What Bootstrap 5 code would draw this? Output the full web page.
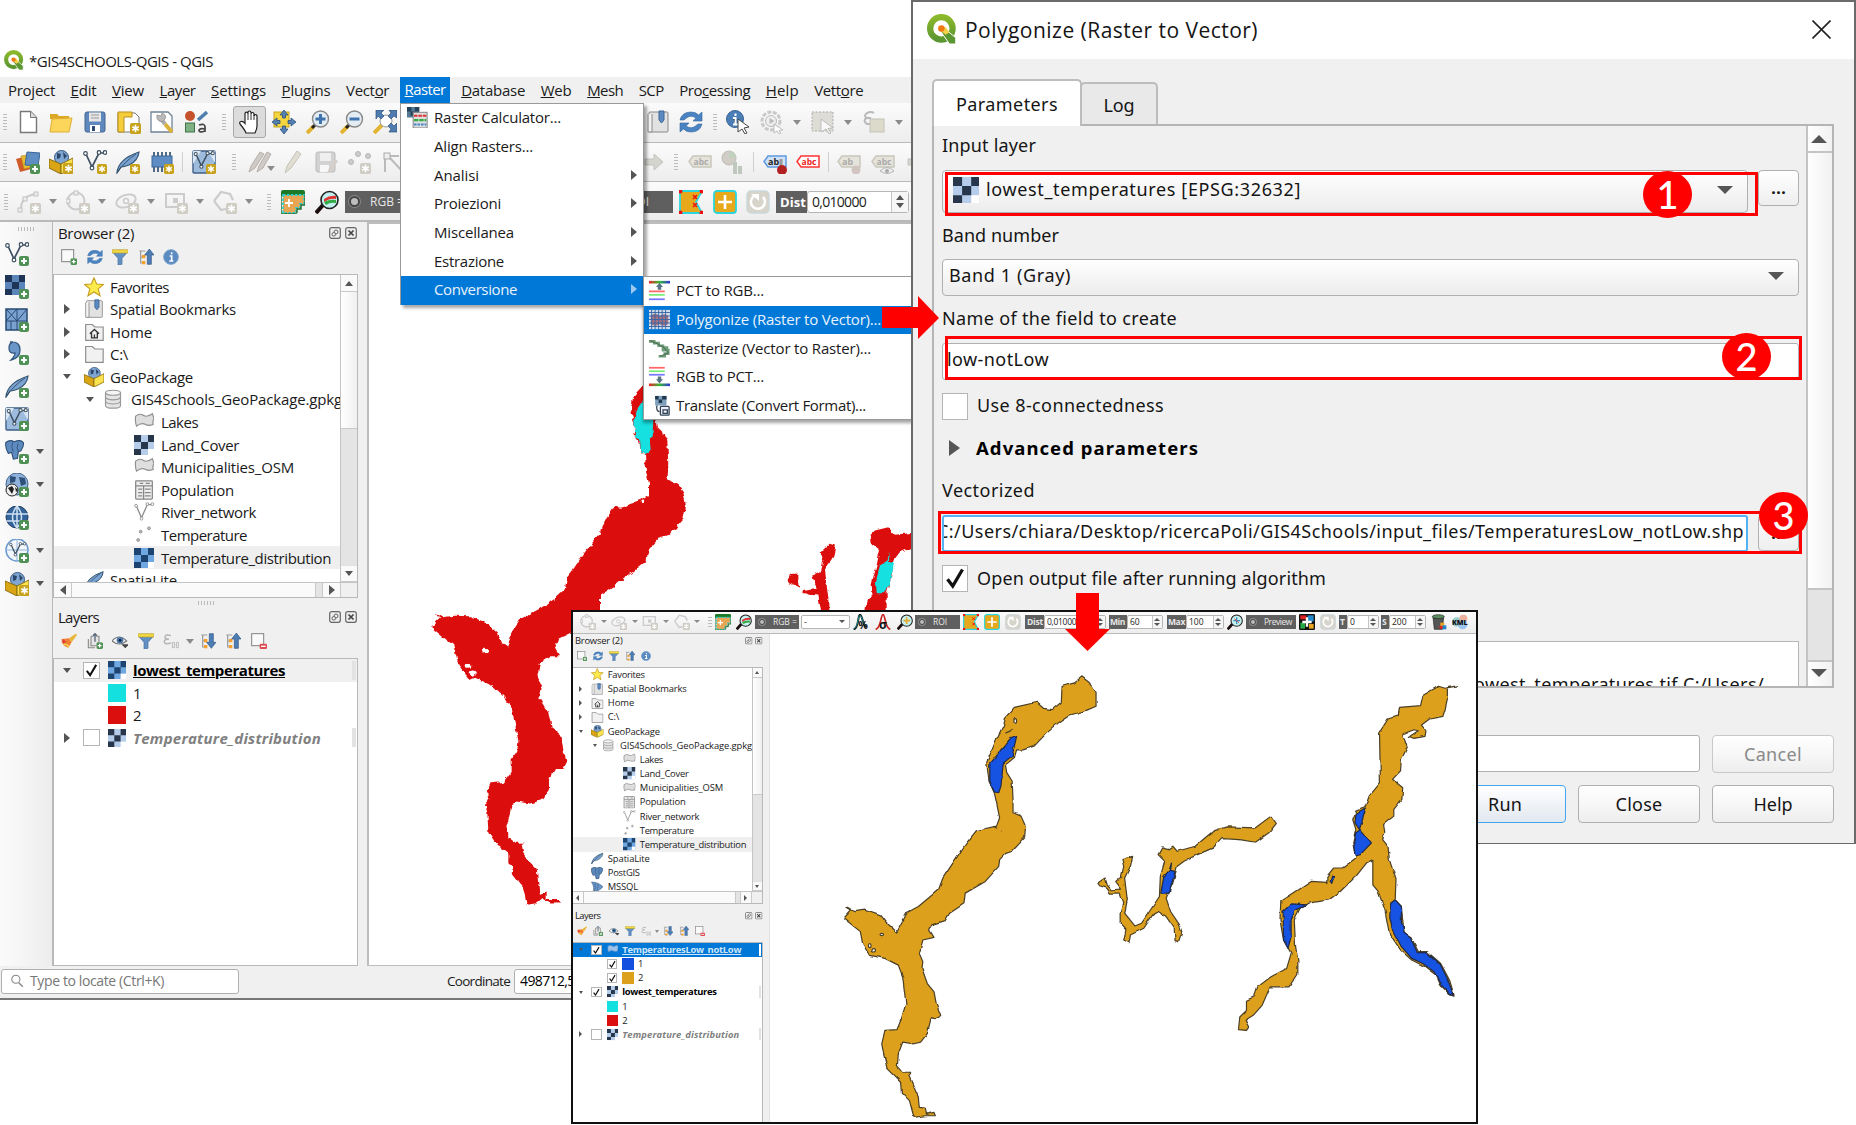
<!DOCTYPE html>
<html lang="en">
<head>
<meta charset="utf-8">
<title>QGIS - Polygonize</title>
<link href="https://cdn.jsdelivr.net/npm/bootstrap@5.3.0/dist/css/bootstrap.min.css" rel="stylesheet">
<style>
body{width:1856px;height:1125px;overflow:hidden;background:#fff;font-family:"Open Sans","Noto Sans",sans-serif;font-size:15px;line-height:1.2;color:#1a1a1a;position:relative}
span,button,a{white-space:nowrap}
.win{position:absolute;overflow:hidden}
#mainwin{left:0;top:40px;width:912px;height:960px;border-bottom:2px solid #777}
.q{display:block;width:24px;height:24px;flex:none}
.q svg{display:block;width:100%;height:100%;overflow:visible}
.titlerow{height:37px;padding:0 0 7px 4px;gap:5px;align-items:flex-end}
.titlerow .q{width:20px;height:20px}
.menurow{height:26px;background:#f0f0f0;padding-left:8px;gap:15.5px}
.menurow .act{background:#0078d7;color:#fff;padding:0 4.5px 0 5px;margin:0 -4.5px 0 -5px;height:26px;line-height:25px}
.tbar{height:40px;background:linear-gradient(#fbfbfb,#ededed);border-bottom:1px solid #b9b9b9;overflow:hidden}
.tbar>div{height:39px}
.hd{width:4px;height:18px;flex:none;background-image:radial-gradient(circle,#b5b5b5 .8px,transparent 1px);background-size:2.5px 3px}
.hh{width:18px;height:4px;background-image:radial-gradient(circle,#b5b5b5 .8px,transparent 1px);background-size:3px 2.5px}
.dn{width:0;height:0;flex:none;border:4.6px solid transparent;border-top:5.5px solid #8b8b8b;border-bottom:0}
.dk{border-top-color:#555}
.rt{width:0;height:0;flex:none;border:5px solid transparent;border-left:6px solid #555;border-right:0}
.up{width:0;height:0;flex:none;border:4.6px solid transparent;border-bottom:5.5px solid #555;border-top:0}
.lf{width:0;height:0;flex:none;border:5px solid transparent;border-right:6px solid #555;border-left:0}
.sp{width:1px;height:20px;background:#cfcfcf;margin:0 -1px;flex:none}
.handbox{width:33px;height:32px;border:1px solid #a9a9a9;border-radius:3px;background:#dcdcdc;padding:3px;margin:0 -3px 0 -3px}
.darkbox{background:#5f5f5f;color:#e8e8e8;height:22px;flex:none;font-size:12px;line-height:22px}
.dot{width:11px;height:11px;border-radius:50%;background:#bdbdbd;border:2.5px solid #444;flex:none;box-shadow:0 0 0 1px #888}
.spin{border:1px solid #b5b5b5;border-radius:3px;background:#fff;height:22px;font-size:14px;flex:none}
.spin .arrows{border-left:1px solid #c5c5c5;width:17px;background:#f6f6f6;height:100%;gap:3px}
.side{width:53px;background:linear-gradient(90deg,#fbfbfb,#ededed);border-right:1px solid #b9b9b9;padding:5px 0 0 5px}
.side .hh{margin:0 0 6px 12px}
.side .r{height:33px;gap:7px}
.panelcol{width:314px;background:#f0f0f0;padding-right:9px;overflow:hidden}
.ptitle{height:22px;padding:0 0 0 5px}
.ptitle .q{width:12px;height:12px}
.ptitle .q.me-1:last-child{margin-right:1px!important}
.ptools{height:30px;padding:0 0 4px 8px;gap:9.6px}
.ptools .q{width:16px;height:16px}
.box{border:1px solid #b9b9b9;background:#fff;overflow:hidden}
.treewrap{height:324px}
.trow{height:22.6px}
.trow .ar{width:14px;display:flex;justify-content:center}
.trow .q{width:20px;height:20px}
.trow.sel{background:#efefef}
.l0{padding-left:6px}.l0 .q{margin:0 6.5px 0 9.5px}
.l1{padding-left:32px}.l1 .q{margin:0 8px 0 9px}
.l2{padding-left:80px}.l2 .q{margin:0 7px 0 0}
.vs{width:17px;background:#e4e4e4;border-left:1px solid #c4c4c4}
.vs .bt{height:17px;background:#fafafa;border:solid #c9c9c9;border-width:0 0 1px}
.vs .th{height:137px;background:linear-gradient(90deg,#fff,#f0f0f0);border-bottom:1px solid #c9c9c9}
.hs{height:18px;border-top:1px solid #c4c4c4;background:#fafafa}
.hs>div{border-right:1px solid #c9c9c9;height:100%}
.lrow{height:22.5px;padding-left:6px}
.lrow .ar{width:14px;display:flex;justify-content:center;margin-right:9px}
.lrow .q{width:18px;height:18px;margin:0 7px 0 8px}
.ck{width:17px;height:17px;border:1px solid #b5b5b5;background:#fff;flex:none}
.ck svg{display:block;width:100%;height:100%}
.sw{width:18px;height:18px;margin-right:7px;flex:none}
.tail{width:4px;height:19px;background:#e3e3e3;margin-left:auto;margin-right:1px}
.canvas{flex:1;background:#fff;border:1px solid #bdbdbd;border-width:2px 0 1px 2px;overflow:hidden;position:relative}
.status{height:32px;background:#f0f0f0;padding:0 0 2px 1px}
.locate{width:238px;height:25px;border:1px solid #b0b0b0;border-radius:3px;background:#fff;color:#777;font-size:14px}
.pop{position:absolute;background:#fff;border:1px solid #9a9a9a;box-shadow:3px 3px 3px rgba(0,0,0,.35)}
.mi{height:28.7px;padding:0 6px 2px 6px}
.mi .q{width:21px;height:21px;margin-right:6px}
.mi.on{background:#0078d7;color:#e9f3fc}
.mi.on .rt{border-left-color:#9ec9ee}
#menu{left:400px;top:103px;width:244px;height:202px}
#sub{left:643px;top:276px;width:280px;height:144px;box-shadow:0 3px 3px rgba(0,0,0,.35)}
#sub .mi{padding-left:5px}
#dlg{left:911px;top:0;width:945px;height:844px;background:#f0f0f0;border:solid #6a6a6a;border-width:2px 2px 1px 2px;font-family:"Noto Sans","Open Sans",sans-serif;font-size:18px;color:#151515}
.dtitle{height:57px;background:#fff;padding:0 23px 0 14px;font-family:"Open Sans",sans-serif;font-size:21px}
.tabs{padding:20px 0 0 19px;height:65px}
.tb{border:2px solid #bdbdbd;border-bottom:0;border-radius:5px 5px 0 0;background:#e9e9e9;height:42px;width:78px;display:flex;align-items:center;justify-content:center;margin-left:-2px;padding-top:3px}
.tb.on{background:#fff;height:47px;width:150px;margin:0 0 -2px;z-index:2;position:relative}
.pane{margin:0 20px 0 19px;height:564px;border:2px solid #b5b5b5;overflow:hidden}
.form{flex:1;padding:2px 7px 0 8px;overflow:hidden}
.combo{border:1.5px solid #b0b0b0;border-radius:4px;background:linear-gradient(#fff,#ececec);height:37px;padding:0 14px 3px 6px}
.edit{border:1.5px solid #b0b0b0;border-radius:3px;background:#fff;height:37px;padding-bottom:3px}
.lb{height:34px;display:flex;align-items:center}
.bigdn{width:0;height:0;border:8px solid transparent;border-top:8px solid #555;border-bottom:0;flex:none}
.bigup{width:0;height:0;border:8px solid transparent;border-bottom:8px solid #555;border-top:0;flex:none}
.pb{border:1.5px solid #b0b0b0;border-radius:4px;background:linear-gradient(#fff,#eee);display:flex;align-items:center;justify-content:center;color:#151515;padding:0;font-size:18px;line-height:1}
.dots{width:41px;height:36px;margin-left:10px;padding-bottom:2px;font-weight:600}
.ck2{width:26px;height:27px;border:1.5px solid #b5b5b5;background:#fff;margin-right:9px;flex:none}
.ck2 svg{width:100%;height:100%;display:block}
.dvs{width:26px;background:#e4e4e4;border-left:2px solid #c4c4c4}
.dvs>div{background:linear-gradient(90deg,#fff,#f1f1f1);border-bottom:2px solid #c4c4c4}
.foot{padding:47px 20px 0 0}
.foot .pb{width:122px;height:38px}
#inset{left:571px;top:610px;width:907px;height:514px;border:2px solid #111;background:#fff}
.mtb{height:22px;padding-bottom:2px;background:linear-gradient(#fbfbfb,#ededed);border-bottom:1px solid #b9b9b9;font-size:9px}
.mtb .q{width:16px;height:16px}
.mtb .dn{border-width:3.5px 3px 0}
.mtb .darkbox,.mtb .spin{height:14px;font-size:8.5px;line-height:14px}
.mtb .spin{line-height:12px;border-radius:2px;font-size:8.5px}
.mtb .spin>span:first-child{padding-left:2px}
.mtb .spin .arrows{width:10px;gap:2px}
.mtb .arrows .dn,.mtb .arrows .up{border-left-width:3px;border-right-width:3px}
.mtb .up{border-width:0 3px 3.5px}
.mtb .hd{height:11px}
.mtb .dot{width:6px;height:6px;border-width:1px}
.mini{zoom:.627}
#miniside{margin-left:-2px}
.ann{position:absolute;border:3px solid #f00}
.num{position:absolute;width:49px;height:47px;border-radius:50%;background:#f00;color:#fff;font:500 38px/46px Lato,sans-serif;text-align:center}
.arrow{position:absolute}
</style>
<script src="https://cdn.jsdelivr.net/npm/bootstrap@5.3.0/dist/js/bootstrap.bundle.min.js"></script>
</head>
<body>
<svg width="0" height="0" class="position-absolute">
<defs>
<filter id="rough" x="-5%" y="-5%" width="110%" height="110%"><feTurbulence type="fractalNoise" baseFrequency=".16" numOctaves="2" seed="4"/><feDisplacementMap in="SourceGraphic" scale="5" xChannelSelector="R" yChannelSelector="G"/></filter>
<filter id="rough2" x="-5%" y="-5%" width="110%" height="110%"><feTurbulence type="fractalNoise" baseFrequency=".12" numOctaves="1" seed="7"/><feDisplacementMap in="SourceGraphic" scale="3.500" xChannelSelector="R" yChannelSelector="G"/></filter>
<linearGradient id="rb"><stop offset="0" stop-color="#e22"/><stop offset=".5" stop-color="#3b3"/><stop offset="1" stop-color="#33d"/></linearGradient>
<linearGradient id="qg" x2="0" y2="1"><stop stop-color="#8cb82b"/><stop offset="1" stop-color="#5a9631"/></linearGradient>
<symbol id="star" viewBox="0 0 12 12"><rect width="12" height="12" rx="2" fill="#c9a21c"/><path d="M6 2v8M2.500 4l7 4M9.500 4l-7 4" stroke="#fff" stroke-width="1.800"/></symbol>
<symbol id="gstar" viewBox="0 0 12 12"><rect width="12" height="12" rx="2" fill="#d0cdc4"/><path d="M6 2v8M2.500 4l7 4M9.500 4l-7 4" stroke="#fff" stroke-width="1.800"/></symbol>
<symbol id="plus" viewBox="0 0 12 12"><rect width="12" height="12" rx="2.500" fill="#4f9155"/><path d="M6 2.500v7M2.500 6h7" stroke="#fff" stroke-width="2.400"/></symbol>
<symbol id="i-logo" viewBox="0 0 24 24"><circle cx="11.500" cy="11.500" r="9" fill="none" stroke="url(#qg)" stroke-width="5"/><path d="M12 10l11 9v5h-5l-7-10z" fill="#5a9631" stroke="#fff" stroke-width=".8"/><path d="M10 9.500l5 1 3 4-3 2-4-3z" fill="#f2d24b"/><circle cx="11.500" cy="11.500" r="2.600" fill="#ee7913"/></symbol>
<symbol id="i-new" viewBox="0 0 24 24"><path d="M4.500 1.500h10l6 6v15h-16z" fill="#fff" stroke="#777" stroke-width="1.400"/><path d="M14.500 1.500v6h6" fill="#ddd" stroke="#777"/></symbol>
<symbol id="i-open" viewBox="0 0 24 24"><path d="M1 4h7l2 2h10v3H1z" fill="#dca927"/><path d="M3 9l20-1-3 14H1z" fill="#fbd65a" stroke="#e0af35"/></symbol>
<symbol id="i-save" viewBox="0 0 24 24"><rect x="2" y="2" width="20" height="20" rx="2" fill="#5e88bd" stroke="#41648f"/><rect x="6" y="2.500" width="12" height="9" fill="#e6e6e6"/><path d="M8 5h8M8 8h8" stroke="#999"/><rect x="7" y="15" width="10" height="7" fill="#fff"/><rect x="9" y="16" width="3" height="5" fill="#2d4a73"/></symbol>
<symbol id="i-layout" viewBox="0 0 24 24"><path d="M1 3h17l4 4v15H1z" fill="#fff" stroke="#777"/><path d="M1 2h14v5H7v15H1z" fill="#f5cd3b" stroke="#b98f1c"/><use href="#star" x="13" y="13" width="11" height="11"/></symbol>
<symbol id="i-tools" viewBox="0 0 24 24"><path d="M1 2h17l4 4v16H1z" fill="#fff" stroke="#6f8397" stroke-width="1.300"/><path d="M11 9l4 5" stroke="#aaa" stroke-width="4"/><path d="M7 5l4 1 1-3q5 2 3 6t-6 2q-3-2-2-6z" fill="#bbb" stroke="#888" stroke-width=".7"/><path d="M15 14l7 8" stroke="#d9b13b" stroke-width="4"/></symbol>
<symbol id="i-style" viewBox="0 0 24 24"><circle cx="6" cy="6" r="5" fill="#c4522b"/><path d="M14 10l9-8" stroke="#4f7fae" stroke-width="3.500"/><rect x="1.500" y="13" width="9" height="9" fill="#7eb184" stroke="#3d7344"/><path d="M15 15q6-2 6 2v5m0-3q-6-1-6 1.500t6 .5" fill="none" stroke="#444" stroke-width="1.700"/></symbol>
<symbol id="i-hand" viewBox="0 0 24 24"><path d="M8 13V4q0-1.800 1.500-1.800T11 4V2.500Q11 1 12.500 1T14 2.500V4q0-1.500 1.500-1.500T17 4v2q0-1.300 1.500-1.300T20 6v10q0 3-2 7H9q-1-3-6-9-1-2 1-2.500t4 2z" fill="#fff" stroke="#222" stroke-width="1.200"/><path d="M11 4v6M14 4v6M17 5v5" stroke="#333"/></symbol>
<symbol id="i-pan" viewBox="0 0 24 24"><rect x="2" y="2" width="15" height="15" fill="#f5d53d" stroke="#c7a51d"/><path d="M12 0l4 5h-2.500v3h-3V5H8zM12 24l4-5h-2.500v-3h-3v3H8zM0 12l5-4v2.500h3v3H5V16zM24 12l-5-4v2.500h-3v3h3V16z" fill="#5381b4" stroke="#2d5078" stroke-width=".8"/></symbol>
<symbol id="lens" viewBox="0 0 24 24"><path d="M1 23l7-7" stroke="#e2b431" stroke-width="4"/><path d="M6 18l3-3" stroke="#222" stroke-width="3"/><circle cx="14.500" cy="9" r="8" fill="#e3ebf3" stroke="#888" stroke-width="1.400"/></symbol>
<symbol id="i-zin" viewBox="0 0 24 24"><use href="#lens"/><path d="M14.500 4v10M9.500 9h10" stroke="#3f73ad" stroke-width="3"/></symbol>
<symbol id="i-zout" viewBox="0 0 24 24"><use href="#lens"/><path d="M9.500 9h10" stroke="#3f73ad" stroke-width="3"/></symbol>
<symbol id="i-zfull" viewBox="0 0 24 24"><path d="M1 23l8-8" stroke="#e2b431" stroke-width="4"/><circle cx="13" cy="11" r="6" fill="#fff" stroke="#999"/><path d="M3 0h8L8 3l3 3-3 3-3-3-2 3zM24 0v8l-3-2-3 3-3-3 3-3-2-3zM24 22h-8l2-3-3-3 3-3 3 3 3-3z" fill="#4e7cb0" stroke="#2d5078" stroke-width=".7"/></symbol>
<symbol id="i-bm" viewBox="0 0 24 24"><rect x="3" y="2" width="19" height="20" rx="1" fill="#e2e2e2" stroke="#888"/><path d="M2 4v18h4V4" fill="#f4f4f4" stroke="#888"/><path d="M13 1h5v9l-2.500 3L13 10z" fill="#5b8ac0" stroke="#3d6596"/></symbol>
<symbol id="i-ref" viewBox="0 0 24 24"><path d="M1 10q2-8 11-8 5 0 7.500 3L23 2v9h-9l3-3q-5-3.500-9.500 0L5 10zM23 14q-2 8-11 8-5 0-7.500-3L1 22v-9h9l-3 3q5 3.500 9.500 0L19 14z" fill="#4a84c2" stroke="#34679f" stroke-width=".6"/></symbol>
<symbol id="i-infoc" viewBox="0 0 24 24"><circle cx="9" cy="9" r="8.500" fill="#4b7db6" stroke="#3b6596"/><path d="M9.500 3.500v2.500M7 8h2.500v6M7 14.500h5" stroke="#fff" stroke-width="2"/><path d="M12 9l11 8-5 1 3 5-2 1-3-5-4 3z" fill="#fff" stroke="#444"/></symbol>
<symbol id="i-info" viewBox="0 0 24 24"><circle cx="12" cy="12" r="11" fill="#5b8bc1" stroke="#7aa0cb" stroke-width="1.500"/><path d="M13 5v3M10 10.500h3v7M9.500 18h6" stroke="#fff" stroke-width="2.400" fill="none"/></symbol>
<symbol id="i-gear" viewBox="0 0 24 24"><circle cx="11" cy="11" r="9" fill="none" stroke="#c9c9c9" stroke-width="3" stroke-dasharray="4 1.500"/><circle cx="11" cy="11" r="5.500" fill="#eee" stroke="#bbb"/><path d="M9.500 8l5 3-5 3z" fill="#bbb"/><path d="M14 14l9 6-4 .5 2 3.500-2 0-2-3-3 2z" fill="#fff" stroke="#bbb"/></symbol>
<symbol id="i-selr" viewBox="0 0 24 24"><rect x="1" y="2" width="21" height="19" fill="#deddd5" stroke="#aaa" stroke-dasharray="2 1.500"/><path d="M10 9l12 9-5 .5 3 4.500-2 1-3-5-5 3z" fill="#f8f8f8" stroke="#bbb"/></symbol>
<symbol id="i-lock" viewBox="0 0 24 24"><rect x="8" y="9" width="14" height="13" fill="#dcdacb" stroke="#c4c2b5"/><path d="M12 3q-3-2-7 0-4 3 0 5h4m-4 0q-5 2 0 6h3" fill="none" stroke="#b9b9b9" stroke-width="2"/></symbol>
<symbol id="i-lay" viewBox="0 0 24 24"><path d="M0 9l11-3 4 13-11 3z" fill="#d05b28"/><path d="M5 6l12-2 3 12-12 3z" fill="#e8ba31" stroke="#b98a1b" stroke-width=".6"/><path d="M11 2l13 1-2 13-13-1z" fill="#5e8dc4" stroke="#3b6596"/><use href="#plus" x="14" y="14" width="10" height="10"/></symbol>
<symbol id="i-gpk" viewBox="0 0 24 24"><circle cx="12.500" cy="7.500" r="7" fill="#7fa5d3" stroke="#38587f"/><path d="M8 3l4 1-1 4-3 1zM14 2l4 4-3 3z" fill="#2c4669"/><path d="M0 9l12 5v10L0 18z" fill="#d9a514" stroke="#8a6d14"/><path d="M24 8l-12 6v10l12-6z" fill="#fbe34f" stroke="#8a6d14"/></symbol>
<symbol id="i-gpks" viewBox="0 0 24 24"><use href="#i-gpk"/><use href="#star" x="14" y="13" width="11" height="11"/></symbol>
<symbol id="vv" viewBox="0 0 24 24"><path d="M3 4l6 13 7-14 5 0" fill="none" stroke="#3d4f60" stroke-width="1.700"/><g fill="#fff" stroke="#3d4f60" stroke-width="1.200"><circle cx="2.500" cy="3.500" r="1.800"/><circle cx="9" cy="18" r="1.800"/><circle cx="16" cy="2.500" r="1.800"/><circle cx="22" cy="2.500" r="1.800"/></g></symbol>
<symbol id="i-vs" viewBox="0 0 24 24"><use href="#vv"/><use href="#star" x="14" y="14" width="10" height="10"/></symbol>
<symbol id="i-vp" viewBox="0 0 24 24"><use href="#vv"/><use href="#plus" x="14" y="14" width="10" height="10"/></symbol>
<symbol id="feather" viewBox="0 0 24 24"><path d="M1 23q1-14 22-21-1 9-10 13-5 2-8 2z" fill="#7ba3d2" stroke="#34536f" stroke-width="1.200"/><path d="M1 23Q8 12 20 4" fill="none" stroke="#34536f"/></symbol>
<symbol id="i-fs" viewBox="0 0 24 24"><use href="#feather"/><use href="#star" x="14" y="14" width="10" height="10"/></symbol>
<symbol id="i-fp" viewBox="0 0 24 24"><use href="#feather"/><use href="#plus" x="14" y="14" width="10" height="10"/></symbol>
<symbol id="i-f" viewBox="0 0 24 24"><use href="#feather"/></symbol>
<symbol id="i-mem" viewBox="0 0 24 24"><path d="M4 2v20M8 2v20M12 2v20M16 2v20M20 2v20" stroke="#34536f" stroke-width="1.700"/><rect x="2" y="6" width="20" height="11" fill="#5e8dc4" stroke="#3b6596"/><use href="#star" x="14" y="14" width="10" height="10"/></symbol>
<symbol id="vbox" viewBox="0 0 24 24"><rect x="1" y="1" width="22" height="22" rx="1" fill="#9dbbdc" stroke="#3e5f86" stroke-width="1.400"/><path d="M1 1h8L1 14zM16 1h7v12z" fill="#dbe7f4"/><use href="#vv" x="1" y="1" width="22" height="21"/></symbol>
<symbol id="i-vbs" viewBox="0 0 24 24"><use href="#vbox"/><use href="#star" x="14" y="14" width="10" height="10"/></symbol>
<symbol id="i-vbp" viewBox="0 0 24 24"><use href="#vbox"/><use href="#plus" x="14" y="14" width="10" height="10"/></symbol>
<symbol id="i-pens" viewBox="0 0 24 24"><path d="M1 22l2-6 9-14 4 2-9 14zM9 22l2-6 8-14 4 2-8 14z" fill="#cfcac6" stroke="#b5b0ac"/></symbol>
<symbol id="i-pen" viewBox="0 0 24 24"><path d="M4 23l2-7 10-15 4 3-10 14z" fill="#e0ded2" stroke="#c5c3b8"/></symbol>
<symbol id="i-gsave" viewBox="0 0 24 24"><rect x="2" y="2" width="19" height="20" rx="2" fill="#d2d2d2" stroke="#bcbcbc"/><rect x="6" y="3" width="11" height="8" fill="#efefef"/><rect x="6" y="15" width="9" height="7" fill="#f7f7f7"/><path d="M13 23l2-5 6-9 3 2-6 9z" fill="#d4cfcb"/></symbol>
<symbol id="i-pts" viewBox="0 0 24 24"><g fill="#ccc" stroke="#b5b5b5"><circle cx="3" cy="12" r="2.500"/><circle cx="10" cy="4" r="2.500"/><circle cx="20" cy="6" r="2.500"/></g><use href="#gstar" x="12" y="13" width="11" height="11"/></symbol>
<symbol id="i-node" viewBox="0 0 24 24"><path d="M4 22V6h14M9 8l12 13" fill="none" stroke="#bbb" stroke-width="2"/><rect x="3" y="3" width="6" height="6" fill="#eee" stroke="#aaa"/></symbol>
<symbol id="i-redo" viewBox="0 0 24 24"><path d="M4 9h9V4l9 8-9 8v-5H4z" fill="#d5d5d0" stroke="#c2c2bd"/></symbol>
<symbol id="tag" viewBox="0 0 24 24"><path d="M5 6h18v11H5l-4-5.500z" stroke-width="1.500"/></symbol>
<symbol id="i-tg" viewBox="0 0 24 24"><use href="#tag" fill="#e6e4da" stroke="#c9c7bd"/><text x="5.500" y="15" font-size="8.500" font-weight="700" font-style="normal" fill="#aaa">abc</text></symbol>
<symbol id="i-tr" viewBox="0 0 24 24"><use href="#tag" fill="#fff" stroke="#f33"/><text x="5.500" y="15" font-size="8.500" font-weight="700" font-style="normal" fill="#e22">abc</text></symbol>
<symbol id="i-tb" viewBox="0 0 24 24"><use href="#tag" fill="#cfe2f7" stroke="#5f9ae0"/><text x="5" y="15" font-size="9" font-weight="700" font-style="normal" fill="#222">ab</text><path d="M18 9v8" stroke="#999" stroke-width="3"/><circle cx="19" cy="20" r="5" fill="#b32020"/></symbol>
<symbol id="i-tgp" viewBox="0 0 24 24"><use href="#tag" fill="#e6e4da" stroke="#c9c7bd"/><text x="5" y="15" font-size="9" font-weight="700" font-style="normal" fill="#aaa">ab</text><circle cx="19" cy="20" r="4.500" fill="#d2c4c0"/></symbol>
<symbol id="i-tge" viewBox="0 0 24 24"><use href="#tag" fill="#e6e4da" stroke="#c9c7bd"/><text x="5.500" y="15" font-size="8.500" font-weight="700" font-style="normal" fill="#aaa">abc</text><path d="M9 21q7-7 14 0-7 5-14 0z" fill="#eee" stroke="#b5b5b5"/><circle cx="16" cy="21" r="2" fill="#aaa"/></symbol>
<symbol id="i-pie" viewBox="0 0 24 24"><circle cx="8" cy="8" r="7" fill="#cfcdc5" stroke="#bcbab2"/><path d="M8 8V1a7 7 0 0 1 7 7z" fill="#c2d0c0"/><path d="M12 12h4v12h-4zM17 16h4v8h-4z" fill="#bfc8bd"/></symbol>
<symbol id="i-crv" viewBox="0 0 24 24"><path d="M4 21Q3 6 19 4" fill="none" stroke="#ccc" stroke-width="2"/><g fill="#eee" stroke="#c2c2c2"><rect x="1" y="18" width="4" height="4"/><rect x="6" y="7" width="4" height="4"/><rect x="17" y="2" width="4" height="4"/></g><use href="#gstar" x="13" y="13" width="11" height="11"/></symbol>
<symbol id="i-cir" viewBox="0 0 24 24"><circle cx="10" cy="11" r="8.500" fill="none" stroke="#ccc" stroke-width="2"/><g fill="#eee" stroke="#c2c2c2"><rect x="0" y="9" width="4" height="4"/><rect x="8" y="1" width="4" height="4"/></g><use href="#gstar" x="13" y="13" width="11" height="11"/></symbol>
<symbol id="i-ell" viewBox="0 0 24 24"><ellipse cx="11" cy="11" rx="10" ry="6" transform="rotate(-20 11 11)" fill="none" stroke="#ccc" stroke-width="2"/><circle cx="11" cy="11" r="2.500" fill="none" stroke="#ccc" stroke-width="1.500"/><use href="#gstar" x="13" y="13" width="11" height="11"/></symbol>
<symbol id="i-rec" viewBox="0 0 24 24"><rect x="2" y="4" width="18" height="13" fill="none" stroke="#ccc" stroke-width="2"/><rect x="9" y="8" width="5" height="5" fill="#ccc"/><use href="#gstar" x="13" y="13" width="11" height="11"/></symbol>
<symbol id="i-ply" viewBox="0 0 24 24"><path d="M1 11L8 2l9 2 3 6M1 11l7 9 5-1" fill="none" stroke="#ccc" stroke-width="2.200"/><use href="#gstar" x="13" y="13" width="11" height="11"/></symbol>
<symbol id="i-scp" viewBox="0 0 24 24"><path d="M0 2q0-2 2-2h20q2 0 2 2v4H0z" fill="#1c7a26"/><path d="M2 5h21v9h-4v4h-4v5H2z" fill="#e7a653" stroke="#3cc" stroke-width="1.800" stroke-dasharray="2.500 1.500"/><path d="M0 4v20h16M24 5v10h-4v4h-4v4" stroke="#1e6c2c" fill="none" stroke-width="1.400"/><path d="M8 9v8M4 13h8" stroke="#fff" stroke-width="1.800"/></symbol>
<symbol id="clens" viewBox="0 0 24 24"><path d="M1 23l7-8" stroke="#1b0d0d" stroke-width="4"/><circle cx="14.500" cy="10" r="8.500" fill="#c4f0f0" stroke="#222" stroke-width="1.600"/></symbol>
<symbol id="i-rgl" viewBox="0 0 24 24"><use href="#clens"/><path d="M9 9q6-4 12-3v3q-6-1-12 3z" fill="#e03333"/><path d="M9 12q6-3 12-2v3q-6-1-10 2z" fill="#3a4"/></symbol>
<symbol id="i-zl" viewBox="0 0 24 24"><use href="#clens"/><path d="M14.500 5v10M9.500 10h10" stroke="#e8a92c" stroke-width="2.500"/></symbol>
<symbol id="i-zb" viewBox="0 0 24 24"><use href="#clens"/><path d="M14.500 5v10M9.500 10h10" stroke="#3c8fc0" stroke-width="2"/><path d="M11 7l7 6" stroke="#e05050" stroke-width="1.500"/></symbol>
<symbol id="i-pct" viewBox="0 0 24 24"><path d="M1 23Q6 22 8 8t6 0 6 10" fill="none" stroke="#111" stroke-width="3"/><path d="M1 22Q6 20 8 8t6 0 6 10" fill="none" stroke="#2bb" stroke-width="1.200"/><text x="8" y="23" font-size="16" font-weight="700" font-style="normal" fill="#111">%</text></symbol>
<symbol id="i-sig" viewBox="0 0 24 24"><path d="M1 23Q6 22 9 8t6 0 8 15" fill="none" stroke="#c22" stroke-width="2.500"/><text x="6" y="23" font-size="18" font-weight="700" font-style="normal" fill="#111">σ</text></symbol>
<symbol id="i-roi" viewBox="0 0 24 24"><path d="M1 1h22l-6 11 6 11H1z" fill="#e8a81c" stroke="#2cd5dd" stroke-width="1.800"/><g fill="#e11"><circle cx="1.500" cy="1.500" r="2"/><circle cx="22.500" cy="1.500" r="2"/><circle cx="1.500" cy="22.500" r="2"/><circle cx="22.500" cy="22.500" r="2"/></g><path d="M14 5l4 4m0-4l-4 4M14 13l4 4m0-4l-4 4" stroke="#e11" stroke-width="1.500"/></symbol>
<symbol id="i-add" viewBox="0 0 24 24"><rect x="1" y="1" width="22" height="22" rx="3" fill="#e8a81c" stroke="#2cd5dd" stroke-width="1.800"/><path d="M12 5v14M5 12h14" stroke="#fff" stroke-width="2.600"/></symbol>
<symbol id="i-undo" viewBox="0 0 24 24"><rect x="1" y="1" width="22" height="22" rx="4" fill="#d6d4cb" stroke="#ccd8dc" stroke-width="1.500"/><path d="M17 7a7 7 0 1 1-9-1" fill="none" stroke="#fff" stroke-width="2.600"/><path d="M5 4h8v7z" fill="#fff"/></symbol>
<symbol id="i-cells" viewBox="0 0 24 24"><rect width="24" height="24" rx="2" fill="#111"/><path d="M2 2h9v6H2z" fill="#d22"/><path d="M13 2h9v9h-9z" fill="#28c"/><path d="M2 13h7v9H2z" fill="#2a4"/><path d="M15 15h7v7h-7z" fill="#e9a522"/><path d="M12 5v14M5 12h14" stroke="#fff" stroke-width="3.500"/></symbol>
<symbol id="i-bin" viewBox="0 0 24 24"><path d="M3 5h16l-2 18H5z" fill="#555" stroke="#222"/><ellipse cx="11" cy="4" rx="9" ry="3" fill="#5a8e5e" stroke="#222"/><rect x="14" y="13" width="6" height="6" fill="#e9a522"/><rect x="17" y="17" width="6" height="6" fill="#28c"/><circle cx="15" cy="20" r="2.500" fill="#d22"/></symbol>
<symbol id="i-kml" viewBox="0 0 24 24"><circle cx="7" cy="12" r="7" fill="#9cc"/><circle cx="17" cy="7" r="6" fill="#eab0a0"/><circle cx="16" cy="16" r="7" fill="#9bc4ee"/><text x="0" y="16" font-size="10.500" font-weight="800" font-style="normal" fill="#111">KML</text></symbol>
<symbol id="ras" viewBox="0 0 20 20"><path d="M0 0h7v7H0zM14 0h6v7h-6zM7 7h7v7H7zM0 14h7v6H0z"/></symbol>
<symbol id="i-ras" viewBox="0 0 20 20"><rect width="20" height="20" fill="#b5cdea"/><path d="M14 14h6v6h-6z" fill="#fff"/><use href="#ras" fill="#27364b"/></symbol>
<symbol id="i-rasb" viewBox="0 0 20 20"><rect width="20" height="20" fill="#6fa8e0"/><path d="M14 14h6v6h-6z" fill="#fff"/><use href="#ras" fill="#1d4470"/></symbol>
<symbol id="i-rasp" viewBox="0 0 24 24"><rect width="20" height="20" fill="#5b84b8"/><use href="#ras" width="20" height="20" fill="#1e3558"/><use href="#plus" x="14" y="14" width="10" height="10"/></symbol>
<symbol id="i-mesh" viewBox="0 0 24 24"><rect x="1" y="1" width="21" height="21" fill="#7ba3d2" stroke="#284a72" stroke-width="1.500"/><path d="M1 1l11 12M12 1L1 13M22 1L12 13M12 1v21M1 13h21M6 13v9" stroke="#284a72" fill="none"/><use href="#plus" x="14" y="14" width="10" height="10"/></symbol>
<symbol id="i-comma" viewBox="0 0 24 24"><path d="M5 1q10-1 10 8 0 8-9 10 4-4 4-7-6 1-6-5 0-5 4-6z" fill="#6a96ca" stroke="#34587f" stroke-width="1.300"/><use href="#plus" x="14" y="14" width="10" height="10"/></symbol>
<symbol id="i-pg" viewBox="0 0 24 24"><path d="M1 3q5-4 10-1 8-3 11 1 1 4-3 10l-3 1-1 8-5 1-2-8-4 1Q0 10 1 3z" fill="#5d8bc0" stroke="#2c4d74" stroke-width="1.300"/><path d="M9 3q-2 6 1 11M16 4q-3 5 0 10" stroke="#2c4d74" fill="none"/></symbol>
<symbol id="i-pgp" viewBox="0 0 24 24"><use href="#i-pg" width="20" height="20"/><use href="#plus" x="14" y="14" width="10" height="10"/></symbol>
<symbol id="i-wms" viewBox="0 0 24 24"><circle cx="12" cy="11" r="11" fill="#8fb2db" stroke="#45678f"/><path d="M5 3l6 1-1 5-5 1zM14 4l6 1 1 6-5 2z" fill="#2f5078"/><circle cx="7" cy="17" r="6" fill="#eee" stroke="#222"/><path d="M3 15l4-2 2 3-2 5-2-3zM10 14l3 3-2 2z" fill="#222"/><use href="#plus" x="14" y="14" width="10" height="10"/></symbol>
<symbol id="i-wcs" viewBox="0 0 24 24"><circle cx="12" cy="11" r="11" fill="#33649b" stroke="#26405f"/><path d="M12 0v22M1 8h22M1 15h22M12 0Q3 11 12 22M12 0q9 11 0 22" stroke="#cfe0f2" fill="none" stroke-width="1.500"/><use href="#plus" x="14" y="14" width="10" height="10"/></symbol>
<symbol id="i-wfs" viewBox="0 0 24 24"><circle cx="12" cy="11" r="11" fill="#f3f7fb" stroke="#6d9bd0" stroke-width="1.500"/><path d="M12 0v22M1 11h22" stroke="#8fb2db"/><use href="#vv" x="3" y="3" width="19" height="17"/><use href="#plus" x="14" y="14" width="10" height="10"/></symbol>
<symbol id="i-addl" viewBox="0 0 24 24"><rect x="1" y="1" width="18" height="18" fill="#fafafa" stroke="#888" stroke-width="1.600"/><use href="#plus" x="14" y="14" width="10" height="10"/></symbol>
<symbol id="i-reml" viewBox="0 0 24 24"><rect x="1" y="1" width="18" height="18" fill="#fafafa" stroke="#888" stroke-width="1.600"/><rect x="13" y="16" width="11" height="8" rx="2" fill="#e04b50"/><path d="M15 20h7" stroke="#fff" stroke-width="2"/></symbol>
<symbol id="i-fil" viewBox="0 0 24 24"><path d="M1 5h22l-8 9v9l-6 1V14z" fill="#6390c5" stroke="#406a9b"/><rect x="0" y="1" width="24" height="5" rx="1" fill="#f2d844" stroke="#b8a02b"/></symbol>
<symbol id="i-upc" viewBox="0 0 24 24"><path d="M2 3h9M4 3v18h6M4 12h6" stroke="#999" stroke-width="1.800" fill="none"/><path d="M6 9h5v5H6zM6 18h5v5H6z" fill="#f3a02c"/><path d="M17 0l7 9h-4v14h-6V9h-4z" fill="#4d7db5" stroke="#2f5580"/></symbol>
<symbol id="i-dnc" viewBox="0 0 24 24"><path d="M2 3h9M4 3v18h6M4 12h6" stroke="#999" stroke-width="1.800" fill="none"/><path d="M6 9h5v5H6zM6 18h5v5H6z" fill="#f3a02c"/><path d="M17 23l7-9h-4V1h-6v13h-4z" fill="#4d7db5" stroke="#2f5580"/></symbol>
<symbol id="i-fav" viewBox="0 0 24 24"><path d="M12 1l3.200 7.500 8.300.5-6.500 5.300 2.300 8.200L12 18l-7.300 4.500L7 14.300.500 9l8.300-.5z" fill="#fdea4b" stroke="#c49c22" stroke-width="1.300"/></symbol>
<symbol id="i-fol" viewBox="0 0 24 24"><path d="M2 3h8l3 3h10v16H2z" fill="#f1f1f1" stroke="#8d8d8d" stroke-width="1.400"/></symbol>
<symbol id="i-home" viewBox="0 0 24 24"><use href="#i-fol"/><path d="M7 14l5.500-5 5.500 5M9 13v6h7v-6M12.500 19v-4" fill="none" stroke="#333" stroke-width="1.600"/></symbol>
<symbol id="i-db" viewBox="0 0 24 24"><path d="M3 4v16q0 3 9 3t9-3V4" fill="#e4e4e4" stroke="#999" stroke-width="1.400"/><ellipse cx="12" cy="4.500" rx="9" ry="3" fill="#f4f4f4" stroke="#999" stroke-width="1.400"/><path d="M3 10q2 3 9 3t9-3M3 15q2 3 9 3t9-3" fill="none" stroke="#999" stroke-width="1.400"/></symbol>
<symbol id="i-poly" viewBox="0 0 24 24"><path d="M2 5q5-4 9-1t11-2l2 6q-2 3-1 7-6 2-9 0-5-3-11 2-2-6-1-12z" fill="#dedede" stroke="#8f8f8f" stroke-width="1.400"/></symbol>
<symbol id="i-polyb" viewBox="0 0 24 24"><path d="M2 5q5-4 9-1t11-2l2 6q-2 3-1 7-6 2-9 0-5-3-11 2-2-6-1-12z" fill="#9cc2ea" stroke="#5b8fc4" stroke-width="1.400"/></symbol>
<symbol id="i-tab" viewBox="0 0 24 24"><rect x="2" y="1" width="20" height="22" rx="1" fill="#eee" stroke="#888" stroke-width="1.500"/><path d="M2 7h20M7 4h4M14 4h5M5 11h5M13 11h7M5 15h5M13 15h7M5 19h5M13 19h7M11.500 7v16" stroke="#888" stroke-width="1.500"/></symbol>
<symbol id="i-line" viewBox="0 0 24 24"><path d="M3 5l6 14 7-16 6 0" fill="none" stroke="#8a8a8a" stroke-width="1.500"/><g fill="#fff" stroke="#8a8a8a"><circle cx="2.500" cy="4.500" r="1.700"/><circle cx="9" cy="20" r="1.700"/><circle cx="16" cy="2.500" r="1.700"/><circle cx="22" cy="2.500" r="1.700"/></g></symbol>
<symbol id="i-pt" viewBox="0 0 24 24"><g fill="#bbb" stroke="#8a8a8a"><circle cx="5" cy="18" r="1.700"/><circle cx="8" cy="8" r="1.700"/><circle cx="18" cy="4" r="1.700"/></g></symbol>
<symbol id="i-ms" viewBox="0 0 24 24"><path d="M1 2q13 0 22 9-6 8-20 11 5-9-2-20z" fill="#6a96ca" stroke="#34587f"/><path d="M7 4q4 8-1 16M13 6q2 6-2 12" stroke="#34587f" fill="none"/></symbol>
<symbol id="i-float" viewBox="0 0 12 12"><rect x=".7" y=".7" width="10.600" height="10.600" rx="2" fill="#eee" stroke="#666" stroke-width="1.200"/><circle cx="7" cy="5" r="2" fill="none" stroke="#666"/><circle cx="4.800" cy="7.300" r="1.800" fill="#eee" stroke="#666"/></symbol>
<symbol id="i-x" viewBox="0 0 12 12"><rect x=".7" y=".7" width="10.600" height="10.600" rx="2" fill="#eee" stroke="#666" stroke-width="1.200"/><path d="M3.500 3.500l5 5m0-5l-5 5" stroke="#444" stroke-width="1.700"/></symbol>
<symbol id="i-brush" viewBox="0 0 24 24"><path d="M1 9l11-1 4 6-5 8q-6-1-10-8z" fill="#ee7f35"/><path d="M2 9l6 4-5 3z" fill="#e23a3a"/><path d="M12 8l10-7 2 2-8 11z" fill="#e8b63a"/><path d="M4 17q5-1 8 4" stroke="#f2d84a" stroke-width="2.500" fill="none"/></symbol>
<symbol id="i-grp" viewBox="0 0 24 24"><path d="M2 9v13h10M6 5h4M6 5v14h12V5h-4" fill="#e5e5e5" stroke="#888" stroke-width="1.600"/><path d="M12 1v12M9 4l3-3 3 3" stroke="#567" stroke-width="2" fill="none"/><use href="#plus" x="14" y="14" width="10" height="10"/></symbol>
<symbol id="i-eye" viewBox="0 0 24 24"><path d="M0 12Q10 0 22 12q-11 9-22 0z" fill="#f4f4f4" stroke="#777" stroke-width="1.600"/><circle cx="12" cy="11" r="5" fill="#4a78ad"/><circle cx="12" cy="11" r="2" fill="#123"/><path d="M14 17h11l-5 6z" fill="#444"/></symbol>
<symbol id="i-eps" viewBox="0 0 24 24"><path d="M12 4Q3 1 3 6q0 3 6 3-7 0-7 4 0 5 10 2" fill="none" stroke="#b5b5b5" stroke-width="2.200"/><path d="M14 22v-8h3v8zM20 22v-8h3v8z" fill="none" stroke="#bbb" stroke-width="1.500"/></symbol>
<symbol id="i-calc" viewBox="0 0 24 24"><path d="M0 0h14v12H0z" fill="#547a96"/><path d="M0 0h5v5H0zM9 0h5v5H9zM4 5h5v5H4z" fill="#26435a"/><rect x="7" y="6" width="16" height="18" fill="#ddd" stroke="#777"/><path d="M8 10h14" stroke="#d33" stroke-width="2.500" stroke-dasharray="4 1"/><path d="M8 15h14" stroke="#3a4" stroke-width="2.500" stroke-dasharray="5 1"/><path d="M8 20h14" stroke="#48c" stroke-width="2.500" stroke-dasharray="3 1"/></symbol>
<symbol id="i-p2r" viewBox="0 0 24 24"><rect y="1" width="24" height="3" fill="url(#rb)"/><path d="M12 3l4 5h-2v3h-4V8H8z" fill="#5b7386"/><path d="M0 13h18" stroke="#f66" stroke-width="2"/><path d="M0 17h18" stroke="#7e7" stroke-width="2"/><path d="M0 22h18" stroke="#77f" stroke-width="2"/></symbol>
<symbol id="i-r2p" viewBox="0 0 24 24"><rect y="20" width="24" height="3" fill="url(#rb)"/><path d="M12 20l4-5h-2v-3h-4v3H8z" fill="#5b7386"/><path d="M0 2h18" stroke="#f66" stroke-width="2"/><path d="M0 6h18" stroke="#7e7" stroke-width="2"/><path d="M0 10h18" stroke="#77f" stroke-width="2"/></symbol>
<symbol id="i-plz" viewBox="0 0 24 24"><path d="M0 1h24v22H0z" fill="#cfdcec"/><path d="M2 8q5-5 10 0 6-4 10 0v9q-5 4-10 0-5 4-10 0z" fill="#a8707c"/><path d="M0 4h24M0 8h24M0 12h24M0 16h24M0 20h24M3 1v22M7 1v22M11 1v22M15 1v22M19 1v22" stroke="#3c69a8" stroke-width="1.100"/></symbol>
<symbol id="i-rsz" viewBox="0 0 24 24"><path d="M0 5h6v2h5v3h5v2h6M16 12v3h6v4h-4v3h-7" fill="none" stroke="#6d9c78" stroke-width="3"/><path d="M1 4l9 4 7 4 5 6-9 4" stroke="#47604d" fill="none"/></symbol>
<symbol id="i-trn" viewBox="0 0 24 24"><rect x="7" y="1" width="13" height="11" fill="#7fa0bd"/><path d="M7 1h4v4H7zM15 1h5v4h-5zM11 5h4v4h-4z" fill="#20384f"/><rect x="13" y="13" width="10" height="10" rx="1" fill="#eef" stroke="#345" stroke-width="1.500"/><path d="M9 12q-1 7 3 7M16 17h5v4h-5z" fill="none" stroke="#345" stroke-width="1.500"/></symbol>
<symbol id="i-loc" viewBox="0 0 24 24"><circle cx="10" cy="9" r="7" fill="none" stroke="#888" stroke-width="1.800"/><path d="M15 15l7 7" stroke="#888" stroke-width="2.500"/></symbol>
<symbol id="chk" viewBox="0 0 16 16"><path d="M3 8.500l3.500 4.500L13 2" fill="none" stroke="#111" stroke-width="2.200"/></symbol>
</defs></svg>

<!-- Main QGIS window -->
<div id="mainwin" class="win d-flex flex-column">
  <div class="titlerow d-flex"><i class="q" data-i="logo"></i><span data-w="184">*GIS4SCHOOLS-QGIS - QGIS</span></div>
  <div class="menurow d-flex align-items-center">
    <span data-w="47">Pro<u>j</u>ect</span><span data-w="26"><u>E</u>dit</span><span data-w="32"><u>V</u>iew</span><span data-w="36"><u>L</u>ayer</span><span data-w="55"><u>S</u>ettings</span><span data-w="49"><u>P</u>lugins</span><span data-w="43">Vect<u>o</u>r</span><span class="act" data-w="41"><u>R</u>aster</span><span data-w="64"><u>D</u>atabase</span><span data-w="31"><u>W</u>eb</span><span data-w="36"><u>M</u>esh</span><span data-w="25">SCP</span><span data-w="71">Pro<u>c</u>essing</span><span data-w="33"><u>H</u>elp</span><span data-w="49">Vett<u>o</u>re</span>
  </div>
  <div class="tbar d-flex">
    <div class="d-flex align-items-center" style="gap:9.7px;padding-left:3px"><b class="hd"></b><i class="q" style="margin-left:-1px" data-i="new"></i><i class="q" data-i="open"></i><i class="q" data-i="save"></i><i class="q" data-i="layout"></i><i class="q" data-i="tools"></i><i class="q" data-i="style"></i><b class="hd ms-1"></b><div class="handbox"><i class="q" data-i="hand"></i></div><i class="q" data-i="pan"></i><i class="q" data-i="zin"></i><i class="q" data-i="zout"></i><i class="q" data-i="zfull"></i></div>
    <div class="d-flex align-items-center ms-auto" style="gap:9.5px;padding-right:9px"><i class="q" data-i="bm"></i><i class="q" data-i="ref"></i><b class="hd"></b><i class="q" data-i="infoc"></i><i class="q" data-i="gear"></i><b class="dn"></b><i class="q" data-i="selr"></i><b class="dn"></b><i class="q" data-i="lock"></i><b class="dn"></b></div>
  </div>
  <div class="tbar d-flex">
    <div class="d-flex align-items-center" style="gap:9.5px;padding-left:3px"><b class="hd"></b><i class="q" data-i="lay" style="margin-left:-1px"></i><i class="q" data-i="gpks"></i><i class="q" data-i="vs"></i><i class="q" data-i="fs"></i><i class="q" data-i="mem"></i><b class="sp"></b><i class="q" data-i="vbs"></i><b class="hd" style="margin-left:7px"></b><i class="q" style="margin-left:2px" data-i="pens"></i><b class="dn" style="margin:12px -4px 0 -14px"></b><i class="q" data-i="pen"></i><i class="q" data-i="gsave"></i><i class="q" data-i="pts"></i><i class="q" data-i="node"></i></div>
    <div class="d-flex align-items-center ms-auto" style="gap:9.3px;margin-right:-16px"><i class="q" data-i="redo"></i><b class="hd"></b><i class="q" data-i="tg"></i><i class="q" data-i="pie"></i><b class="sp"></b><i class="q" data-i="tb"></i><i class="q" data-i="tr"></i><b class="sp"></b><i class="q" data-i="tgp"></i><i class="q" data-i="tge"></i><i class="q" data-i="redo"></i></div>
  </div>
  <div class="tbar d-flex" style="border-bottom-width:2px">
    <div class="d-flex align-items-center" style="gap:8.5px;padding-left:4px"><b class="hd"></b><i class="q" data-i="crv"></i><b class="dn"></b><i class="q" data-i="cir"></i><b class="dn"></b><i class="q" data-i="ell"></i><b class="dn"></b><i class="q" data-i="rec"></i><b class="dn"></b><i class="q" data-i="ply"></i><b class="dn"></b><b class="hd" style="margin-left:5px"></b><i class="q" style="margin-left:2px" data-i="scp"></i><i class="q" style="margin-left:1px" data-i="rgl"></i><div class="darkbox d-flex align-items-center px-1" style="margin-left:-2px;width:90px;gap:10px"><b class="dot"></b><span data-w="34">RGB =</span></div></div>
    <div class="d-flex align-items-center ms-auto" style="padding-right:3px"><div class="darkbox text-end" style="width:73px;padding-right:24px">ROI</div><i class="q" style="margin-left:6px" data-i="roi"></i><i class="q" style="margin-left:10px" data-i="add"></i><i class="q" style="margin-left:9px" data-i="undo"></i><div class="darkbox fw-bold text-white px-1" style="margin-left:6px;width:31px;font-size:13px"><span data-w="26">Dist</span></div><div class="spin d-flex align-items-center" style="width:102px"><span class="ps-1" data-w="54">0,010000</span><div class="arrows ms-auto d-flex flex-column align-items-center justify-content-center"><b class="up"></b><b class="dn dk"></b></div></div></div>
  </div>
  <div class="d-flex flex-grow-1 overflow-hidden">
    <div class="side">
      <div class="hh"></div>
      <div class="r d-flex align-items-center"><i class="q" data-i="vp"></i></div>
      <div class="r d-flex align-items-center"><i class="q" data-i="rasp"></i></div>
      <div class="r d-flex align-items-center"><i class="q" data-i="mesh"></i></div>
      <div class="r d-flex align-items-center"><i class="q" data-i="comma"></i></div>
      <div class="r d-flex align-items-center"><i class="q" data-i="fp"></i></div>
      <div class="r d-flex align-items-center"><i class="q" data-i="vbp"></i></div>
      <div class="r d-flex align-items-center"><i class="q" data-i="pgp"></i><b class="dn dk"></b></div>
      <div class="r d-flex align-items-center"><i class="q" data-i="wms"></i><b class="dn dk"></b></div>
      <div class="r d-flex align-items-center"><i class="q" data-i="wcs"></i></div>
      <div class="r d-flex align-items-center"><i class="q" data-i="wfs"></i><b class="dn dk"></b></div>
      <div class="r d-flex align-items-center"><i class="q" data-i="gpks"></i><b class="dn dk"></b></div>
    </div>
    <div class="panelcol d-flex flex-column">
      <div id="browser">
        <div class="ptitle d-flex align-items-center"><span class="me-auto" data-w="76">Browser (2)</span><i class="q me-1" data-i="float"></i><i class="q me-1" data-i="x"></i></div>
        <div class="ptools d-flex align-items-center"><i class="q" data-i="addl"></i><i class="q" data-i="ref"></i><i class="q" data-i="fil"></i><i class="q" data-i="upc"></i><i class="q" data-i="info"></i></div>
        <div class="box treewrap d-flex flex-column">
          <div class="d-flex flex-grow-1 overflow-hidden">
            <div class="flex-grow-1 overflow-hidden">
              <div class="trow l0 d-flex align-items-center"><b class="ar"></b><i class="q" data-i="fav"></i><span data-w="59">Favorites</span></div>
              <div class="trow l0 d-flex align-items-center"><b class="ar"><b class="rt"></b></b><i class="q" data-i="bm"></i><span data-w="126">Spatial Bookmarks</span></div>
              <div class="trow l0 d-flex align-items-center"><b class="ar"><b class="rt"></b></b><i class="q" data-i="home"></i><span data-w="42">Home</span></div>
              <div class="trow l0 d-flex align-items-center"><b class="ar"><b class="rt"></b></b><i class="q" data-i="fol"></i><span data-w="18">C:\</span></div>
              <div class="trow l0 d-flex align-items-center"><b class="ar"><b class="dn dk"></b></b><i class="q" data-i="gpk"></i><span data-w="83">GeoPackage</span></div>
              <div class="trow l1 d-flex align-items-center"><b class="ar"><b class="dn dk"></b></b><i class="q" data-i="db"></i><span data-w="211">GIS4Schools_GeoPackage.gpkg</span></div>
              <div class="trow l2 d-flex align-items-center"><i class="q" data-i="poly"></i><span data-w="37">Lakes</span></div>
              <div class="trow l2 d-flex align-items-center"><i class="q" data-i="ras"></i><span data-w="78">Land_Cover</span></div>
              <div class="trow l2 d-flex align-items-center"><i class="q" data-i="poly"></i><span data-w="133">Municipalities_OSM</span></div>
              <div class="trow l2 d-flex align-items-center"><i class="q" data-i="tab"></i><span data-w="73">Population</span></div>
              <div class="trow l2 d-flex align-items-center"><i class="q" data-i="line"></i><span data-w="95">River_network</span></div>
              <div class="trow l2 d-flex align-items-center"><i class="q" data-i="pt"></i><span data-w="86">Temperature</span></div>
              <div class="trow l2 sel d-flex align-items-center"><i class="q" data-i="rasb"></i><span data-w="170">Temperature_distribution</span></div>
              <div class="trow l0 d-flex align-items-center"><b class="ar"></b><i class="q" data-i="f"></i><span data-w="67">SpatiaLite</span></div>
              <div class="trow l0 d-flex align-items-center"><b class="ar"></b><i class="q" data-i="pg"></i><span data-w="51">PostGIS</span></div>
              <div class="trow l0 d-flex align-items-center"><b class="ar"></b><i class="q" data-i="ms"></i><span data-w="48">MSSQL</span></div>
            </div>
            <div class="vs d-flex flex-column"><div class="bt d-flex align-items-center justify-content-center"><b class="up"></b></div><div class="th"></div><div class="bt mt-auto border-top d-flex align-items-center justify-content-center"><b class="dn dk"></b></div></div>
          </div>
          <div class="hs d-flex"><div class="d-flex align-items-center justify-content-center" style="width:18px"><b class="lf"></b></div><div class="flex-grow-1"></div><div style="width:7px;background:#e4e4e4"></div><div class="d-flex align-items-center justify-content-center" style="width:18px"><b class="rt"></b></div><div style="width:16px;background:#f0f0f0;border:0"></div></div>
        </div>
      </div>
      <div class="d-flex justify-content-center" style="height:8px;padding-top:3px"><div class="hh"></div></div>
      <div class="ltools">
        <div class="ptitle d-flex align-items-center"><span class="me-auto" data-w="41">Layers</span><i class="q me-1" data-i="float"></i><i class="q me-1" data-i="x"></i></div>
        <div class="ptools d-flex align-items-center"><i class="q" data-i="brush"></i><i class="q" data-i="grp"></i><i class="q" data-i="eye"></i><i class="q" data-i="fil"></i><i class="q" data-i="eps"></i><b class="dn" style="margin:0 -4px 0 -3px"></b><i class="q" data-i="dnc"></i><i class="q" data-i="upc"></i><i class="q" data-i="reml"></i></div>
      </div>
      <div class="box flex-grow-1">
        <div class="lrow d-flex align-items-center" style="background:#f0f0f0"><b class="ar"><b class="dn dk"></b></b><div class="ck"><svg><use href="#chk"/></svg></div><i class="q" data-i="rasb"></i><span class="fw-bold text-decoration-underline text-black" data-w="152">lowest_temperatures</span><b class="tail"></b></div>
        <div class="lrow d-flex align-items-center" style="padding-left:54px"><b class="sw" style="background:#14e0e0"></b><span>1</span></div>
        <div class="lrow d-flex align-items-center" style="padding-left:54px"><b class="sw" style="background:#dc0f0f"></b><span>2</span></div>
        <div class="lrow d-flex align-items-center"><b class="ar"><b class="rt"></b></b><div class="ck"></div><i class="q" data-i="ras"></i><span class="fw-bold fst-italic" style="color:#808080" data-w="188">Temperature_distribution</span><b class="tail"></b></div>
      </div>
    </div>
    <div class="canvas">
      <svg width="545" height="745" style="display:block"><g filter="url(#rough)"><g transform="translate(31,5) scale(.33333 .43367)" fill="#dc0f0f">
        <path d="M730 360L700 385 693 415 700 440 705 460 700 475 718 490 722 512 735 520 738 560 747 590 747 612 720 625 690 632 660 645 640 643 605 685 598 705 575 725 550 750 515 790 500 805 495 830 460 855 420 875 360 900 335 930 322 965 305 955 290 930 250 905 210 893 160 892 130 895 107 885 120 898 93 918 120 935 160 960 175 1005 210 1040 225 1035 270 1050 310 1075 335 1105 345 1140 355 1180 352 1205 335 1225 335 1250 310 1275 275 1278 262 1300 265 1315 255 1328 262 1345 265 1390 290 1420 325 1440 325 1460 340 1470 335 1485 370 1520 380 1558 410 1555 425 1545 455 1553 480 1553 475 1545 440 1545 440 1530 420 1535 415 1510 410 1475 390 1460 370 1440 365 1418 375 1415 350 1415 325 1400 322 1370 335 1330 350 1320 390 1325 430 1315 447 1295 447 1270 465 1245 490 1245 500 1230 490 1200 480 1165 455 1150 445 1115 415 1080 428 1060 412 1030 420 1000 450 985 480 985 465 965 475 945 515 930 530 890 600 890 600 845 650 820 700 790 740 765 745 740 780 710 810 705 850 670 858 640 850 605 835 590 802 580 805 545 802 490 790 470 770 455 765 430z"/>
        <path d="M1163 810l7-15 25 0 0 25 5 8-35-13zM1235 800l27-10 8-25-8-20 28-20 18 5-8 25-25 30 5 35 5 30 0 40-20 0-10-45-45-3 2-10 38-4zM1412 705l13-10 40-7 20 17 60-5 0 33-45 12-20 20-5 35-15 40 0 50-65 0 5-35 18-5-3-30 15-45 10-35-25-15z"/>
        <g fill="#14e0e0"><path d="M730 393l-18 22-9 25 2 40 15 5 2 25 13 10 17-10-2-20 8-20 2-30z"/><path d="M1468 742l-1 23 16 3-13 47-15 25-25 0-2-25 12-40 22-10z"/></g>
        <g fill="#fff"><ellipse cx="255" cy="973" rx="9" ry="5"/><ellipse cx="204" cy="1007" rx="7" ry="5"/><ellipse cx="218" cy="1024" rx="9" ry="6"/><ellipse cx="728" cy="629" rx="7" ry="3"/></g>
      </g></g></svg>
    </div>
  </div>
  <div class="status d-flex align-items-center"><div class="locate d-flex align-items-center ps-2"><i class="q" style="width:14px;height:14px" data-i="loc"></i><span style="margin-left:6px" data-w="134">Type to locate (Ctrl+K)</span></div><span style="margin-left:208px;font-size:13.500px" data-w="63">Coordinate</span><div class="locate text-black d-flex align-items-center" style="width:170px;margin-left:4px;padding-left:5px"><span data-w="62">498712,55</span></div></div>
</div>

<!-- Raster menu and its submenu -->
<div id="menu" class="pop">
  <div class="mi d-flex align-items-center"><i class="q" data-i="calc"></i><span data-w="127">Raster Calculator...</span></div>
  <div class="mi d-flex align-items-center"><i class="q"></i><span class="me-auto" data-w="99">Align Rasters...</span></div>
  <div class="mi d-flex align-items-center"><i class="q"></i><span class="me-auto" data-w="45">Analisi</span><b class="rt"></b></div>
  <div class="mi d-flex align-items-center"><i class="q"></i><span class="me-auto" data-w="67">Proiezioni</span><b class="rt"></b></div>
  <div class="mi d-flex align-items-center"><i class="q"></i><span class="me-auto" data-w="80">Miscellanea</span><b class="rt"></b></div>
  <div class="mi d-flex align-items-center"><i class="q"></i><span class="me-auto" data-w="70">Estrazione</span><b class="rt"></b></div>
  <div class="mi on d-flex align-items-center"><i class="q"></i><span class="me-auto" data-w="83">Conversione</span><b class="rt"></b></div>
</div>
<div id="sub" class="pop">
  <div class="mi d-flex align-items-center"><i class="q" data-i="p2r"></i><span data-w="88">PCT to RGB...</span></div>
  <div class="mi on d-flex align-items-center"><i class="q" data-i="plz"></i><span data-w="205">Polygonize (Raster to Vector)...</span></div>
  <div class="mi d-flex align-items-center"><i class="q" data-i="rsz"></i><span data-w="195">Rasterize (Vector to Raster)...</span></div>
  <div class="mi d-flex align-items-center"><i class="q" data-i="r2p"></i><span data-w="88">RGB to PCT...</span></div>
  <div class="mi d-flex align-items-center"><i class="q" data-i="trn"></i><span data-w="190">Translate (Convert Format)...</span></div>
</div>

<!-- Polygonize dialog -->
<div id="dlg" class="win">
  <div class="dtitle d-flex align-items-center"><i class="q" style="width:30px;height:30px;margin-top:-3px" data-i="logo"></i><span class="ms-2 me-auto" data-w="293">Polygonize (Raster to Vector)</span><svg width="19" height="19" style="margin-top:-2px"><path d="M.5.5l18 18m0-18l-18 18" stroke="#222" stroke-width="1.600"/></svg></div>
  <div class="tabs d-flex align-items-end"><div class="tb on"><span data-w="102">Parameters</span></div><div class="tb"><span data-w="31">Log</span></div></div>
  <div class="pane d-flex">
    <div class="form">
      <div class="lb" style="height:43px;padding-bottom:7px"><span data-w="94">Input layer</span></div>
      <div class="d-flex align-items-start" style="margin-top:-1px"><div class="combo flex-grow-1 d-flex align-items-center" style="height:43px;padding-left:10px"><i class="q" style="width:26px;height:26px" data-i="ras"></i><span class="me-auto" style="margin-left:7px" data-w="315">lowest_temperatures [EPSG:32632]</span><b class="bigdn"></b></div><button class="pb dots">...</button></div>
      <div class="lb" style="height:46px"><span data-w="117">Band number</span></div>
      <div class="combo d-flex align-items-center"><span class="me-auto" data-w="122">Band 1 (Gray)</span><b class="bigdn"></b></div>
      <div class="lb" style="height:47px;padding-bottom:2px"><span data-w="235">Name of the field to create</span></div>
      <div class="edit d-flex align-items-center" style="padding-left:4px"><span data-w="102">low-notLow</span></div>
      <div class="d-flex align-items-center" style="height:56px;padding-bottom:4px"><div class="ck2"></div><span data-w="187">Use 8-connectedness</span></div>
      <div class="d-flex align-items-center" style="height:28px;padding:0 0 4px 7px"><b class="rt" style="border-width:8px 0 8px 11px"></b><span class="fw-bold text-black" style="margin-left:16px;font-size:18.500px" data-w="223">Advanced parameters</span></div>
      <div class="lb" style="height:51px;padding-top:2px"><span data-w="93">Vectorized</span></div>
      <div class="d-flex"><div class="edit flex-grow-1 d-flex align-items-center justify-content-end overflow-hidden" style="width:0;border-color:#55b3f5;border-width:2px"><span data-w="807">C:/Users/chiara/Desktop/ricercaPoli/GIS4Schools/input_files/TemperaturesLow_notLow.shp</span><b style="width:1.500px;height:24px;background:#111;margin-right:2px"></b></div><button class="pb dots">...</button></div>
      <div class="d-flex align-items-center" style="height:53px"><div class="ck2"><svg><use href="#chk"/></svg></div><span data-w="349">Open output file after running algorithm</span></div>
      <div class="border bg-white overflow-hidden" style="margin-top:36px;height:80px;padding:32px 0 0 519px;border-color:#b5b5b5!important"><span data-w="302">/lowest_temperatures.tif C:/Users/</span></div>
    </div>
    <div class="dvs d-flex flex-column"><div class="d-flex align-items-center justify-content-center" style="height:27px;padding-right:3px"><b class="bigup"></b></div><div style="height:437px"></div><div class="mt-auto d-flex align-items-center justify-content-center" style="height:26px;border-top:2px solid #c4c4c4;border-bottom:0;padding:0 3px 2px 0"><b class="bigdn"></b></div></div>
  </div>
  <div class="foot d-flex flex-column gap-2">
    <div class="d-flex justify-content-end align-items-start"><div class="edit" style="width:767px;margin-right:12px"></div><button class="pb" style="color:#8a8a8a;border-color:#c9c9c9"><span data-w="58">Cancel</span></button></div>
    <div class="d-flex justify-content-end" style="gap:12px;margin-top:4px"><button class="pb" style="border-color:#45a5ef;background:linear-gradient(#fff,#e1e8f0)"><span data-w="34">Run</span></button><button class="pb"><span data-w="47">Close</span></button><button class="pb"><span data-w="39">Help</span></button></div>
  </div>
</div>

<!-- Result window -->
<div id="inset" class="win">
  <div class="mtb d-flex align-items-center">
    <div class="d-flex align-items-center" style="gap:4.600px;padding-left:7px"><i class="q" data-i="cir"></i><b class="dn"></b><i class="q" data-i="ell"></i><b class="dn"></b><i class="q" data-i="rec"></i><b class="dn"></b><i class="q" data-i="ply"></i><b class="dn"></b><b class="hd" style="margin:0 0 0 3px"></b><i class="q" style="margin-left:-1px" data-i="scp"></i><i class="q" data-i="rgl"></i></div>
    <div class="darkbox d-flex align-items-center px-1 gap-2" style="width:44px;margin-left:3px"><b class="dot"></b><span data-w="24">RGB =</span></div>
    <div class="spin d-flex align-items-center pe-1" style="width:49px;margin-left:2px"><span class="me-auto">-</span><b class="dn dk"></b></div>
    <i class="q" style="margin-left:3px" data-i="pct"></i><i class="q" style="margin-left:6px" data-i="sig"></i><i class="q" style="margin-left:6px" data-i="zl"></i>
    <div class="darkbox d-flex align-items-center px-1 gap-2" style="width:45px;margin-left:2px"><b class="dot"></b><span>ROI</span></div>
    <i class="q" style="margin-left:3px" data-i="roi"></i><i class="q" style="margin-left:5px" data-i="add"></i><i class="q" style="margin-left:5px" data-i="undo"></i>
    <div class="darkbox fw-bold" style="width:19px;margin-left:4px;padding-left:2px"><span data-w="16">Dist</span></div><div class="spin d-flex" style="width:62px"><span data-w="34">0,010000</span><div class="arrows ms-auto d-flex flex-column align-items-center justify-content-center"><b class="up"></b><b class="dn dk"></b></div></div>
    <div class="darkbox fw-bold" style="width:18px;margin-left:3px;padding-left:1px"><span data-w="15">Min</span></div><div class="spin d-flex" style="width:36px"><span>60</span><div class="arrows ms-auto d-flex flex-column align-items-center justify-content-center"><b class="up"></b><b class="dn dk"></b></div></div>
    <div class="darkbox fw-bold" style="width:19px;margin-left:4px;padding-left:1px"><span data-w="17">Max</span></div><div class="spin d-flex" style="width:38px"><span>100</span><div class="arrows ms-auto d-flex flex-column align-items-center justify-content-center"><b class="up"></b><b class="dn dk"></b></div></div>
    <i class="q" style="margin-left:3px" data-i="zb"></i>
    <div class="darkbox d-flex align-items-center px-1 gap-1" style="width:50px;margin-left:3px"><b class="dot me-1"></b><span data-w="28">Preview</span></div>
    <i class="q" style="margin-left:3px" data-i="cells"></i><i class="q" style="margin-left:5px" data-i="undo"></i>
    <div class="darkbox fw-bold" style="width:8px;margin-left:3px;padding-left:1px">T</div><div class="spin d-flex" style="width:32px"><span>0</span><div class="arrows ms-auto d-flex flex-column align-items-center justify-content-center"><b class="up"></b><b class="dn dk"></b></div></div>
    <div class="darkbox fw-bold" style="width:8px;margin-left:2px;padding-left:1px">S</div><div class="spin d-flex" style="width:37px"><span>200</span><div class="arrows ms-auto d-flex flex-column align-items-center justify-content-center"><b class="up"></b><b class="dn dk"></b></div></div>
    <i class="q" style="margin-left:5px" data-i="bin"></i><i class="q" style="margin-left:5px" data-i="kml"></i>
  </div>
  <div class="d-flex" style="height:490px">
    <div class="mini panelcol d-flex flex-column flex-shrink-0" id="miniside">
      <div id="minilayers" class="box flex-grow-1">
        <div class="lrow d-flex align-items-center" style="background:#0078d7"><b class="ar"><b class="dn dk"></b></b><div class="ck"><svg><use href="#chk"/></svg></div><i class="q" data-i="polyb"></i><span class="fw-bold text-decoration-underline" style="color:#cfe6fa" data-w="190">TemperaturesLow_notLow</span><b class="tail bg-white"></b></div>
        <div class="lrow d-flex align-items-center" style="padding-left:54px"><div class="ck"><svg><use href="#chk"/></svg></div><b class="sw ms-2" style="background:#1450e0"></b><span>1</span></div>
        <div class="lrow d-flex align-items-center" style="padding-left:54px"><div class="ck"><svg><use href="#chk"/></svg></div><b class="sw ms-2" style="background:#dda01b"></b><span>2</span></div>
        <div class="lrow d-flex align-items-center"><b class="ar"><b class="dn dk"></b></b><div class="ck"><svg><use href="#chk"/></svg></div><i class="q" data-i="ras"></i><span class="fw-bold text-black" data-w="151">lowest_temperatures</span><b class="tail"></b></div>
        <div class="lrow d-flex align-items-center" style="padding-left:54px"><b class="sw" style="background:#14e0e0"></b><span>1</span></div>
        <div class="lrow d-flex align-items-center" style="padding-left:54px"><b class="sw" style="background:#dc0f0f"></b><span>2</span></div>
        <div class="lrow d-flex align-items-center"><b class="ar"><b class="rt"></b></b><div class="ck"></div><i class="q" data-i="ras"></i><span class="fw-bold fst-italic" style="color:#808080" data-w="187">Temperature_distribution</span><b class="tail"></b></div>
      </div>
    </div>
    <div class="flex-grow-1 border-start overflow-hidden">
      <svg width="709" height="488" viewBox="769.500 635.500 709 488" style="display:block"><g filter="url(#rough2)"><g transform="translate(779.500,600) scale(.4464 .3348)" fill="#dda01b" stroke="#4a3f28" stroke-width="1.200" stroke-linejoin="round">
        <path vector-effect="non-scaling-stroke" d="M676 234L692 250 708 280 708 300 708 322 685 335 650 348 625 370 595 405 570 440 545 452 530 452 525 475 505 497 508 520 520 545 522 600 522 640 540 650 550 680 548 715 520 755 505 762 492 780 490 800 460 845 415 880 412 912 380 940 370 962 340 975 335 990 345 1012 320 1020 312 1060 320 1085 318 1105 330 1150 345 1175 350 1210 360 1245 350 1258 338 1255 330 1300 315 1325 300 1330 275 1325 265 1360 263 1395 275 1415 295 1415 288 1425 300 1460 310 1490 312 1520 325 1522 328 1540 345 1535 348 1545 325 1545 300 1550 290 1500 272 1475 270 1445 240 1405 232 1360 228 1330 235 1290 262 1288 272 1255 282 1210 275 1130 265 1095 235 1075 200 1065 185 1030 180 995 143 955 160 930 150 922 168 932 190 928 225 945 240 970 262 997 285 938 310 920 355 870 365 835 390 785 415 735 440 693 485 680 492 655 485 610 480 580 468 545 463 490 485 420 500 380 505 355 525 325 575 310 590 328 610 332 630 310 632 262 660 252z"/>
        <path vector-effect="non-scaling-stroke" d="M1100 650L1112 672 1095 700 1065 728 1030 720 990 717 970 745 935 765 905 785 890 800 880 850 865 895 875 935 895 975 900 995 893 1025 885 1022 883 985 865 950 850 935 835 945 815 985 785 1005 782 1028 770 1020 775 990 762 970 762 940 768 910 760 880 740 880 732 865 716 858 712 850 728 835 733 855 742 870 765 868 752 845 765 830 770 800 766 780 790 770 785 800 772 835 778 900 772 940 795 978 810 970 835 920 850 890 852 830 862 785 847 765 855 745 870 750 880 740 890 755 930 740 970 695 1000 682 1065 685z"/>
        <path vector-effect="non-scaling-stroke" d="M1518 261L1495 265 1495 300 1490 330 1485 352 1455 360 1437 378 1447 395 1445 412 1420 418 1410 412 1430 395 1420 392 1395 405 1405 445 1392 480 1390 515 1372 540 1395 565 1393 600 1375 630 1375 650 1352 675 1355 700 1350 720 1362 740 1365 780 1380 840 1378 900 1392 920 1395 960 1398 1000 1415 1015 1430 1055 1450 1055 1480 1090 1500 1140 1510 1185 1498 1180 1480 1155 1470 1125 1445 1100 1415 1080 1390 1050 1365 1000 1355 930 1340 875 1328 855 1328 785 1320 780 1290 830 1255 875 1230 900 1185 910 1165 925 1152 960 1155 1040 1160 1080 1160 1120 1140 1160 1098 1160 1080 1215 1060 1245 1042 1260 1050 1280 1045 1290 1027 1288 1030 1250 1045 1230 1045 1200 1062 1190 1070 1160 1100 1130 1135 1105 1145 1060 1128 1020 1120 960 1122 905 1190 845 1225 848 1225 830 1240 805 1260 805 1290 775 1283 730 1290 690 1283 660 1290 635 1310 625 1320 590 1345 550 1343 400 1362 360 1385 350 1388 325 1435 320 1440 290 1475 262 1490 268z"/>
        <g fill="#1652e2" stroke="#222a44"><path vector-effect="non-scaling-stroke" d="M530 412L520 470 500 492 495 560 490 580 480 578 470 545 470 490 490 460 515 420zM877 790L875 812 885 815 872 880 853 880 860 830 872 812zM1312 628L1305 660 1298 690 1288 670 1290 645zM1300 690L1325 730 1300 765 1288 770 1285 730 1290 700zM1180 915L1155 930 1145 960 1145 1010 1138 1045 1128 1020 1127 935 1145 912zM1378 900L1392 920 1392 965 1398 1000 1413 1015 1428 1058 1450 1058 1478 1090 1495 1135 1508 1182 1500 1180 1482 1152 1465 1115 1440 1090 1415 1075 1392 1040 1372 990 1366 950 1368 910zM1236 826l5 5-5 20-4-8z"/></g>
        <g fill="#fff"><ellipse vector-effect="non-scaling-stroke" cx="228" cy="1005" rx="4" ry="5"/><ellipse vector-effect="non-scaling-stroke" cx="201" cy="1037" rx="3" ry="6"/><ellipse vector-effect="non-scaling-stroke" cx="210" cy="1051" rx="4" ry="5"/><ellipse vector-effect="non-scaling-stroke" cx="527" cy="366" rx="3" ry="7"/><path vector-effect="non-scaling-stroke" d="M505 402l14-8M478 680l8 6M495 695h1M1349 563v1"/></g>
      </g></g></svg>
    </div>
  </div>
</div>

<!-- Annotations -->
<div class="ann" style="left:945px;top:172px;width:813px;height:44px"></div>
<div class="ann" style="left:945px;top:336px;width:857px;height:44px"></div>
<div class="ann" style="left:938px;top:511px;width:864px;height:43px"></div>
<div class="num" style="left:1643px;top:171px">1</div>
<div class="num" style="left:1722px;top:333px">2</div>
<div class="num" style="left:1759px;top:492px">3</div>
<svg class="arrow" style="left:882px;top:296px" width="58" height="44"><path d="M0 11h36V0l21 22-21 21V32H0z" fill="#f00"/></svg>
<svg class="arrow" style="left:1065px;top:593px" width="45" height="59"><path d="M11 0h23v36h11L22.500 58 0 36h11z" fill="#f00"/></svg>

<script>
// Expand icon placeholders into sprite references.
document.querySelectorAll('[data-i]').forEach(function (el) {
  el.innerHTML = '<svg><use href="#i-' + el.dataset.i + '"/></svg>';
});
// Track each label to its design width.
var ctx = document.createElement('canvas').getContext('2d');
document.querySelectorAll('[data-w]').forEach(function (el) {
  var cs = getComputedStyle(el), t = el.textContent;
  ctx.font = cs.fontStyle + ' ' + cs.fontWeight + ' ' + cs.fontSize + ' ' + cs.fontFamily;
  el.style.letterSpacing = ((el.dataset.w - ctx.measureText(t).width) / t.length).toFixed(3) + 'px';
});
// The result window repeats the browser panel and the layer tools at a smaller size.
var side = document.getElementById('miniside'), layers = document.getElementById('minilayers');
var b = document.getElementById('browser').cloneNode(true);
b.id = 'browser2';
b.querySelector('.treewrap').style.height = '378px';
b.querySelector('.th').style.height = '187px';
side.insertBefore(b, layers);
var gap = document.createElement('div');
gap.style.height = '9px';
side.insertBefore(gap, layers);
side.insertBefore(document.querySelector('.ltools').cloneNode(true), layers);
</script>
</body>
</html>
